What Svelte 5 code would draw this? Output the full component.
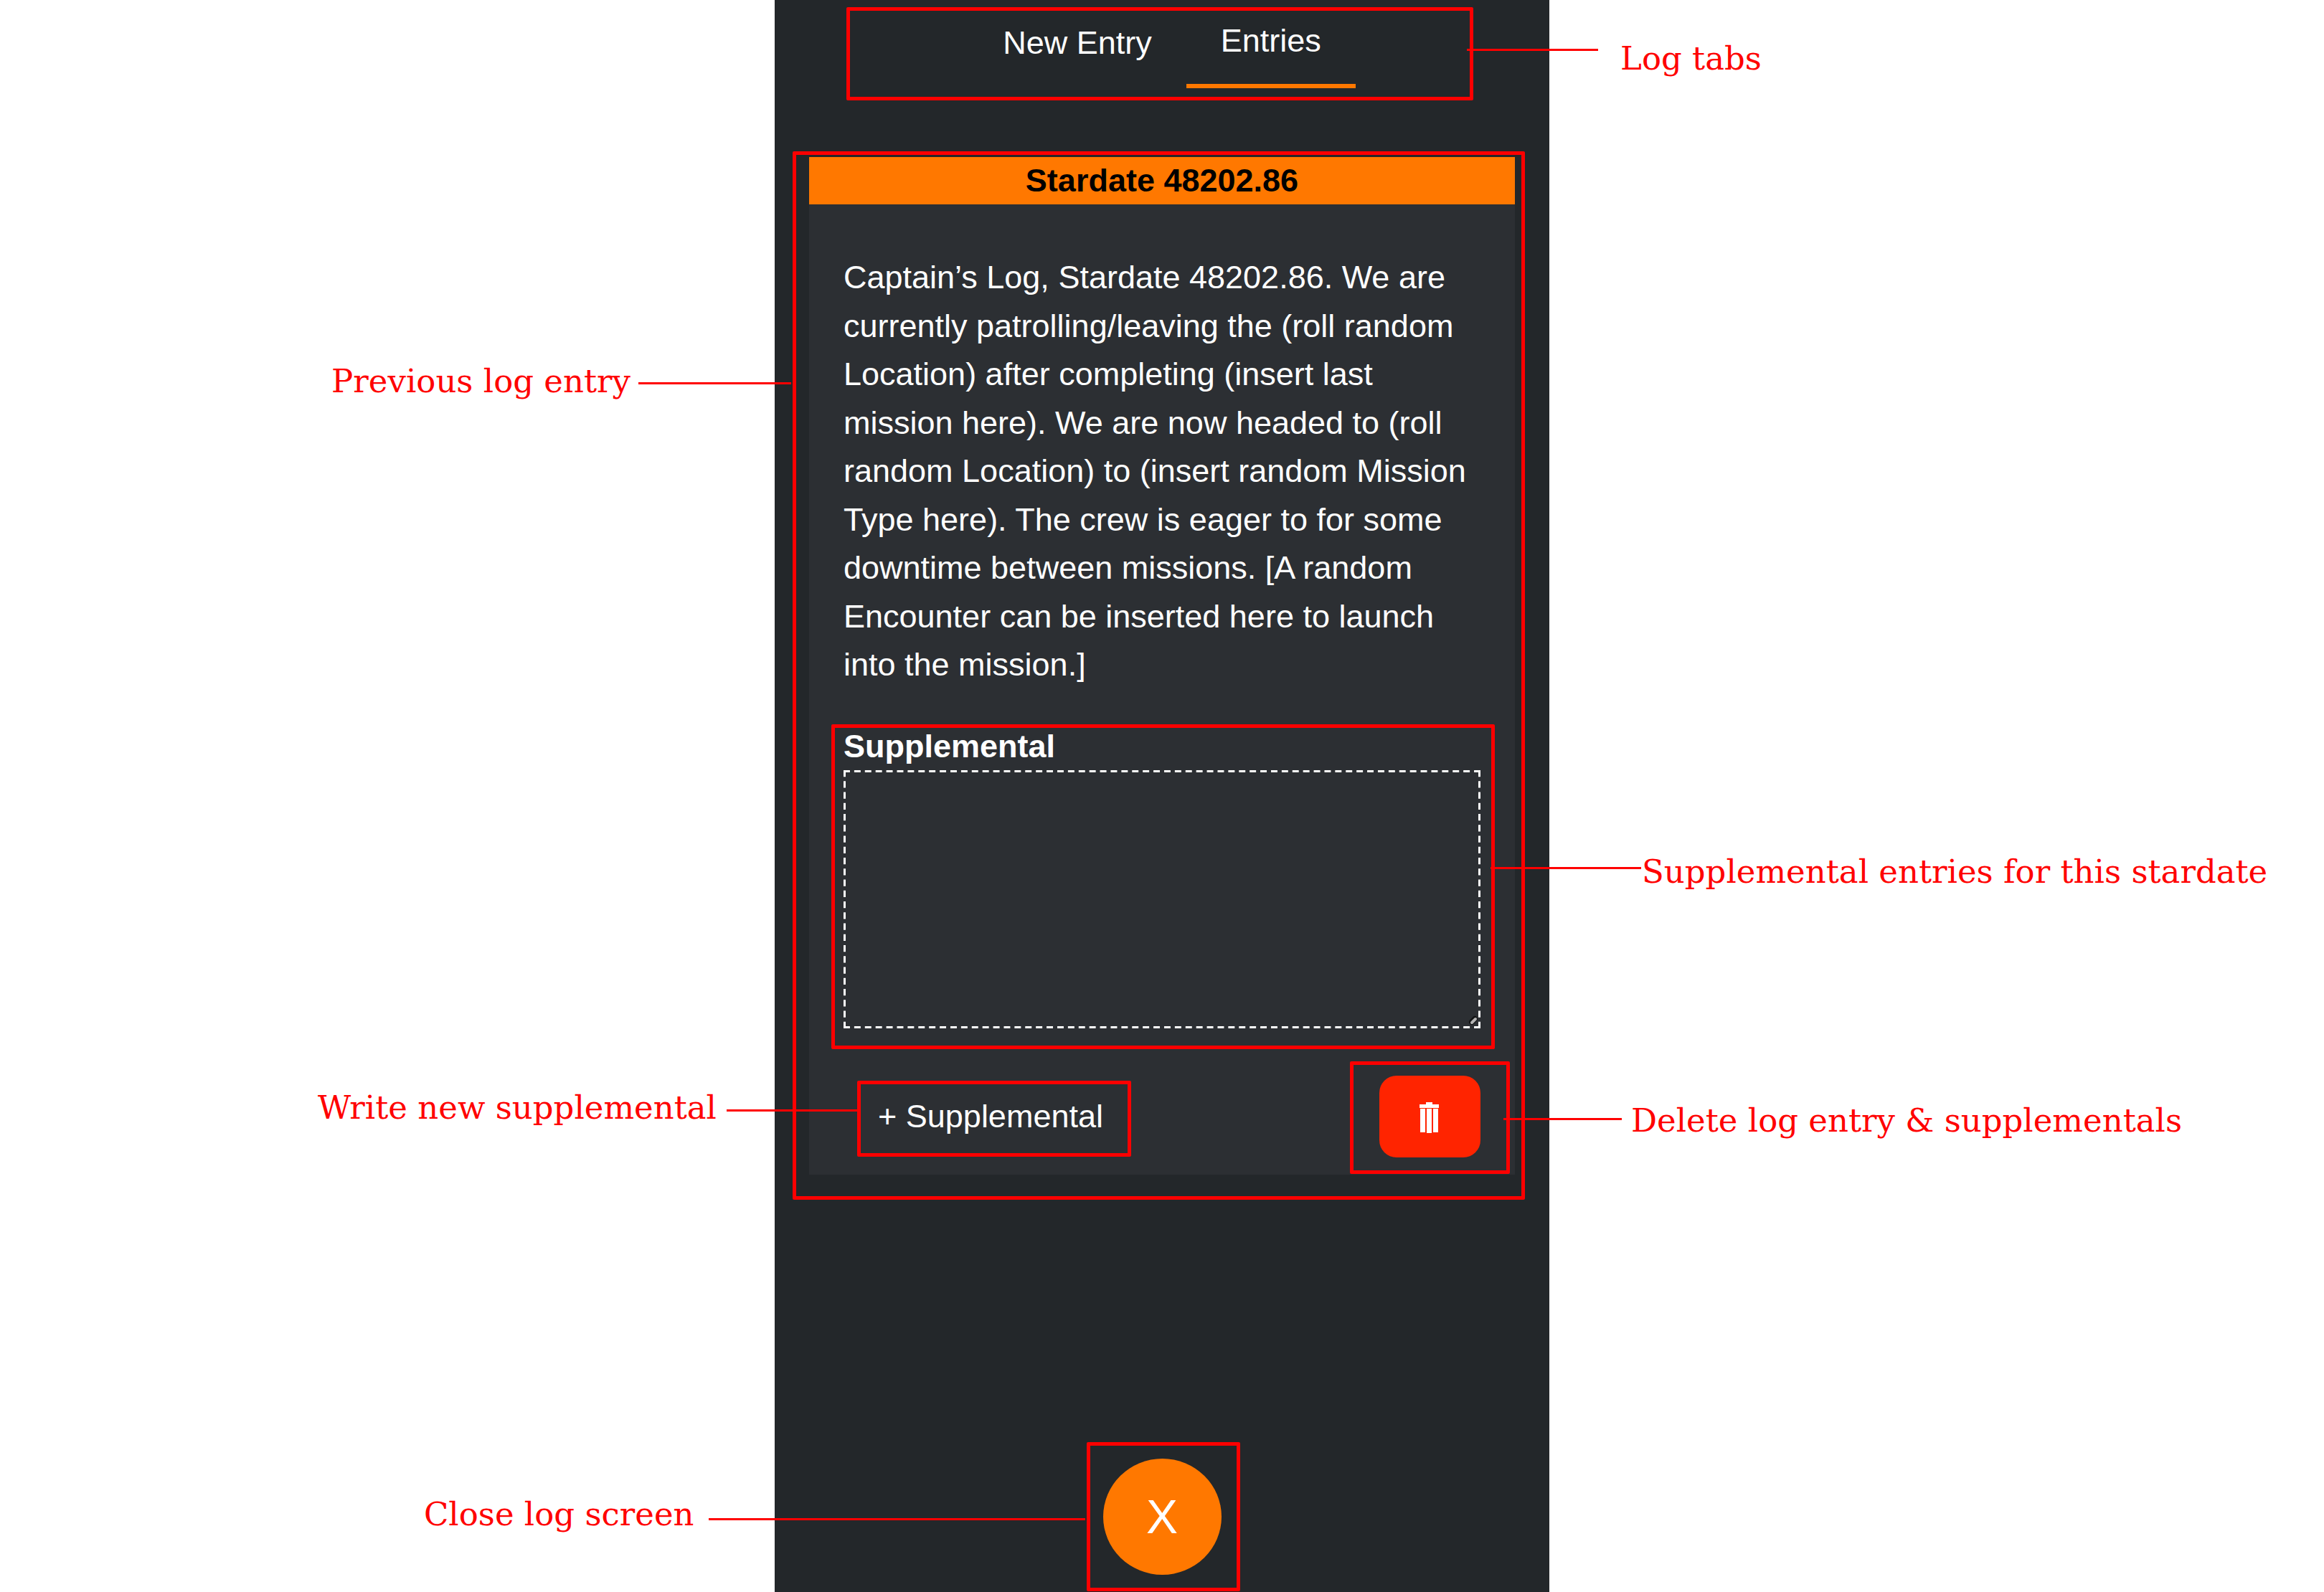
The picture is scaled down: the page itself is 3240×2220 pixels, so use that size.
<script>
  const stardate = '48202.86';
  const tabs = ['New Entry', 'Entries'];
  let active = $state('Entries');
  let supplemental = $state('');
</script>

{#snippet callout(name, text)}
  <div class="callout {name}">
    <span class="leader"></span>
    <span class="note">{text}</span>
  </div>
{/snippet}

<div class="page">
  <main class="phone">
    <nav class="tabs">
      {#each tabs as tab}
        <button class="tab" class:active={tab === active} onclick={() => (active = tab)}>{tab}</button>
      {/each}
      {@render callout('log-tabs', 'Log tabs')}
    </nav>

    <article class="card">
      <h2>Stardate {stardate}</h2>
      <div class="body">
        <p>
          Captain’s Log, Stardate {stardate}. We are currently patrolling/leaving the (roll random
          Location) after completing (insert last mission here). We are now headed to (roll random
          Location) to (insert random Mission Type here). The crew is eager to for some downtime
          between missions. [A random Encounter can be inserted here to launch into the mission.]
        </p>
        <div class="field">
          <label for="supplemental">Supplemental</label>
          <div class="dashed">
            <textarea id="supplemental" bind:value={supplemental}></textarea>
            <svg class="dashes" aria-hidden="true">
              <g stroke="#fff" stroke-width="6" stroke-dasharray="9 6">
                <line x1="0" y1="0" x2="100%" y2="0" pathLength="894" />
                <line x1="0" y1="100%" x2="100%" y2="100%" pathLength="894" />
                <line x1="0" y1="0" x2="0" y2="100%" pathLength="354" />
                <line x1="100%" y1="0" x2="100%" y2="100%" pathLength="354" />
              </g>
              <svg x="100%" y="100%" overflow="visible" fill="none" stroke-linecap="round">
                <path d="M-12 -9L-8 -13" stroke="#131415" stroke-width="8" />
                <path d="M-12 -8L-7 -13" stroke="#b4b4b4" stroke-width="4" />
              </svg>
            </svg>
          </div>
          {@render callout('entries', 'Supplemental entries for this stardate')}
        </div>
        <div class="actions">
          <div class="action">
            <button class="add">+ Supplemental</button>
            {@render callout('write', 'Write new supplemental')}
          </div>
          <div class="action">
            <button class="delete" aria-label="Delete log entry">
              <svg viewBox="0 -4 29 48" width="29" height="48" fill="#fff" aria-hidden="true">
                <path d="M9 0h9v3h9v5H0V3h9z" />
                <path d="M1 9h7v33H1zM10 9h7v34h-7zM19 9h7v33h-7z" />
              </svg>
            </button>
            {@render callout('remove', 'Delete log entry & supplementals')}
          </div>
        </div>
      </div>
      {@render callout('previous', 'Previous log entry')}
    </article>

    <div class="closer">
      <button class="close">X</button>
      {@render callout('close-log', 'Close log screen')}
    </div>
  </main>
</div>

<style>
  :global(body) {
    margin: 0;
    background: #fff;
  }

  .page {
    display: grid;
    grid-template-columns: repeat(3, 1fr);
    min-height: 100vh;
    overflow: hidden;
    font: 45px/1.5 'Liberation Sans', Arial, sans-serif;
    color: #fff;
  }

  .phone {
    grid-column: 2;
    display: flex;
    flex-direction: column;
    align-items: center;
    box-sizing: border-box;
    padding: 0 48px 24px;
    background: #23272a;
  }

  button {
    box-sizing: border-box;
    padding: 0;
    border: 0;
    background: none;
    color: inherit;
    font: inherit;
    cursor: pointer;
  }

  .tabs {
    position: relative;
    display: flex;
    justify-content: center;
    align-self: stretch;
    height: 123px;
    margin: 0 -48px 96px;
  }

  .tab {
    padding: 0 48px 3px;
  }

  .tab.active {
    border-bottom: 6px solid #ff7800;
  }

  .card {
    position: relative;
    align-self: stretch;
    background: #2c2f33;
  }

  h2 {
    margin: 0;
    background: #ff7800;
    color: #000;
    font-size: 45px;
    line-height: 66px;
    text-align: center;
  }

  .body {
    padding: 68px 48px 24px;
  }

  p {
    margin: 0 0 46px;
  }

  .field,
  .dashed,
  .action,
  .closer {
    position: relative;
  }

  label {
    display: block;
    font-weight: 700;
  }

  textarea {
    display: block;
    box-sizing: border-box;
    width: 100%;
    height: 360px;
    padding: 12px;
    border: 0;
    resize: none;
    background: none;
    color: inherit;
    font: inherit;
  }

  .dashes {
    position: absolute;
    inset: 0;
    width: 100%;
    height: 100%;
    pointer-events: none;
  }

  .actions {
    display: flex;
    justify-content: space-between;
    margin-top: 66px;
  }

  .add {
    height: 114px;
    padding: 0 48px;
  }

  .delete {
    display: flex;
    align-items: center;
    justify-content: center;
    width: 141px;
    height: 114px;
    border-radius: 24px;
    background: #ff2400;
  }

  .closer {
    margin-top: auto;
  }

  .close {
    display: block;
    width: 165px;
    height: 162px;
    border-radius: 50%;
    background: #ff7800;
    font-size: 66px;
  }

  /* Annotation frames, each anchored to the part it describes */
  .callout {
    position: absolute;
    border: 5px solid #f00;
    border-radius: 2px;
    color: #f00;
    font: 45px/60px 'DejaVu Serif', serif;
    pointer-events: none;
  }

  .leader {
    position: absolute;
    height: 3px;
    background: #f00;
  }

  .note {
    position: absolute;
    white-space: nowrap;
  }

  .log-tabs { inset: 10px 106px -17px 100px; }
  .log-tabs .leader { top: 53px; left: calc(100% - 4px); width: 183px; }
  .log-tabs .note { top: 37px; left: calc(100% + 210px); }

  .previous { inset: -8px -14px -35px -23px; }
  .previous .leader { top: 317px; right: calc(100% + 7px); width: 213px; }
  .previous .note { top: 286px; right: calc(100% + 231px); }

  .entries { inset: 3px -20px -29px -17px; }
  .entries .leader { top: 194px; left: calc(100% - 1px); width: 210px; }
  .entries .note { top: 171px; left: calc(100% + 210px); }

  .write { inset: 7px 9px 1px 19px; }
  .write .leader { top: 35px; right: calc(100% + 4px); width: 183px; }
  .write .note { top: 3px; right: calc(100% + 201px); }

  .remove { inset: -20px -41px -23px; }
  .remove .leader { top: 74px; left: calc(100% - 4px); width: 165px; }
  .remove .note { top: 48px; left: calc(100% + 174px); }

  .close-log { inset: -23px -26px -23px -23px; }
  .close-log .leader { top: 101px; right: calc(100% + 7px); width: 525px; }
  .close-log .note { top: 66px; right: calc(100% + 552px); }
</style>
